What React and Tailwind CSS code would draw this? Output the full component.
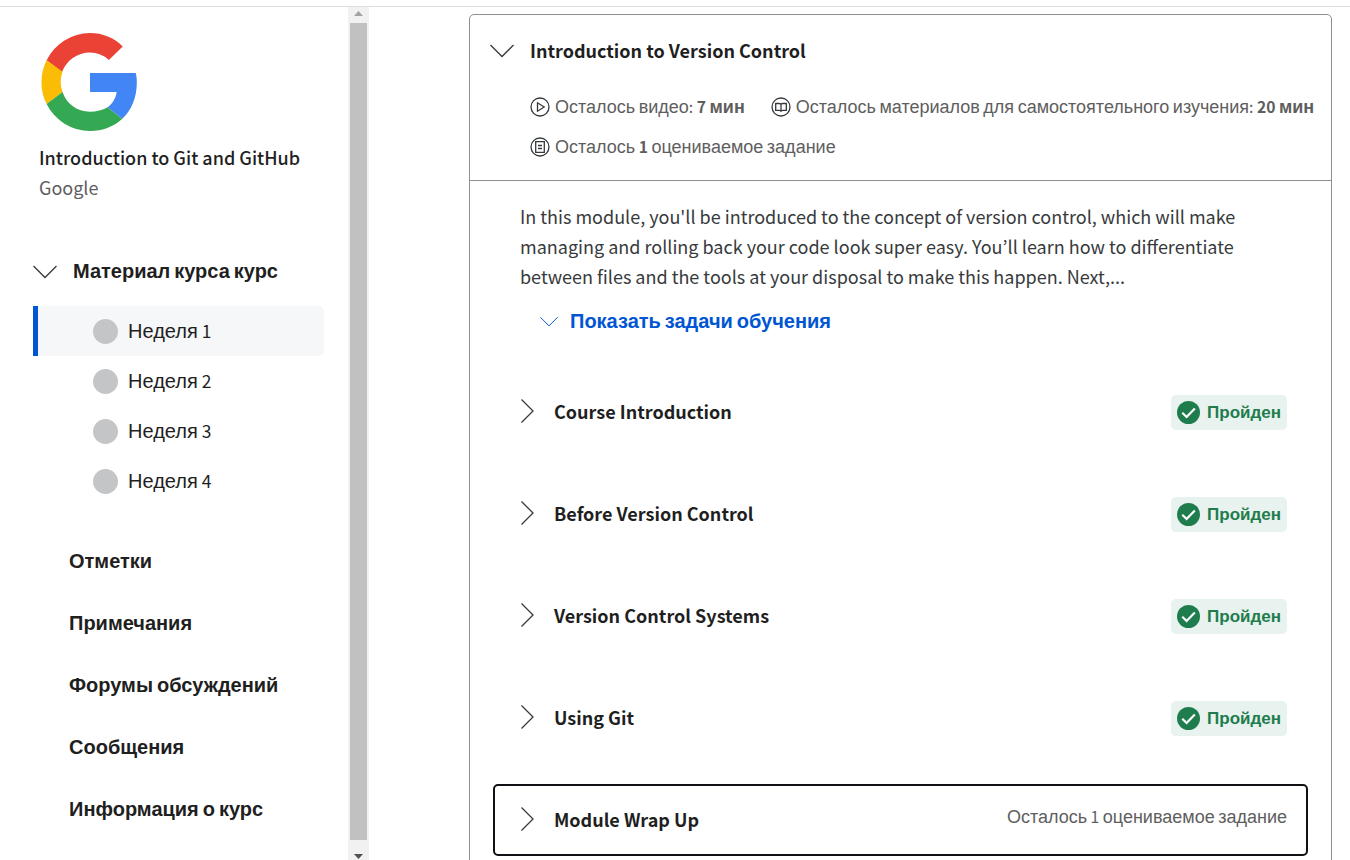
import React from "react";

const LATIN = "font-['Noto_Sans_CJK_KR','Noto_Sans',sans-serif] text-[0.87em]";
const CYRILLIC = "font-['Liberation_Sans',Arial,sans-serif]";

/* Cyrillic words use the Arial-metric face; digits, spaces and Latin use the humanist one. */
function Mixed({ children }) {
  return children
    .split(/([\u0400-\u04ff]+)/)
    .filter(Boolean)
    .map((part, i) => (
      <span key={i} className={/[\u0400-\u04ff]/.test(part) ? CYRILLIC : LATIN}>
        {part}
      </span>
    ));
}

function ChevronDown({ className }) {
  return (
    <svg viewBox="0 0 24 24" className={className} fill="none" stroke="currentColor" strokeWidth="1.3" aria-hidden="true">
      <path d="M0.5 7 12 18.500 23.500 7" />
    </svg>
  );
}

function ChevronRight() {
  return (
    <svg viewBox="0 0 24 24" className="size-6 shrink-0" fill="none" stroke="#373a3c" strokeWidth="1.3" aria-hidden="true">
      <path d="M0.5 0.5 12 12 0.5 23.5" />
    </svg>
  );
}

function GoogleLogo() {
  return (
    <svg viewBox="0 0 96 98" className="h-[98px] w-24" role="img" aria-label="Google">
      <path fill="#ea4335" d="M5.6 27.3A49 49 0 0 1 49 0c12.5 0 24 4.600 32.700 13.400L67.900 27A27.500 27.500 0 0 0 49 19.500c-12.800 0-23.700 8-28 19.600Z" />
      <path fill="#fbbc05" d="M5.600 27.300a49 49 0 0 0 0 43.800L21.500 59a30 30 0 0 1 0-20.200Z" />
      <path fill="#34a853" d="M5.600 71.100A49 49 0 0 0 49 98c12.800 0 24-4.300 32.300-12.200L66.500 74.300C61.600 77.300 55.600 78.700 49 78.700c-12.800 0-23.500-7.700-27.500-19.700Z" />
      <path fill="#4285f4" d="M49 40h45.700c.9 3 1.100 6 1.100 9.800 0 15-5.500 27.700-14.500 36L66.500 74.300c4.800-3.300 8.100-8.700 9.200-15.300H49Z" />
    </svg>
  );
}

function StatIcon({ kind }) {
  return (
    <svg viewBox="0 0 20 20" className="size-5 shrink-0" fill="none" stroke="#373a3c" strokeWidth="1.3" aria-hidden="true">
      <circle cx="10" cy="10" r="9" />
      {kind === "video" && <path d="M7.500 5.800v8.400l6.700-4.200Z" />}
      {kind === "reading" && (
        <path d="M10 6.800v7.200M4.700 6.500H8.300Q10 6.500 10 7.500 10 6.500 11.700 6.500h3.600v6.800h-3.800L10 14.300 8.500 13.300H4.700Z" />
      )}
      {kind === "quiz" && <path d="M5.700 4.700h8.600v10.600H5.700ZM8 8.500h4M8 11.500h4" />}
    </svg>
  );
}

function Stat({ kind, children }) {
  return (
    <li className="flex h-10 items-center gap-[5px]">
      <StatIcon kind={kind} />
      <span className="whitespace-nowrap">{children}</span>
    </li>
  );
}

function Passed() {
  return (
    <span className="flex h-[35px] items-center gap-[7px] rounded-[5px] bg-[#e8f2ee] px-1.5 text-[17px] font-bold text-[#1f7c4d]">
      <svg viewBox="0 0 24 24" className="size-[23px]" aria-hidden="true">
        <circle cx="12" cy="12" r="12" fill="#1f7c4d" />
        <path d="m5.500 12.300 4.500 4.400 8.600-8.900" fill="none" stroke="#fff" strokeWidth="2.300" />
      </svg>
      <Mixed>Пройден</Mixed>
    </span>
  );
}

const weeks = ["Неделя 1", "Неделя 2", "Неделя 3", "Неделя 4"];
const links = ["Отметки", "Примечания", "Форумы обсуждений", "Сообщения", "Информация о курс"];
const lessons = [
  { title: "Course Introduction", done: true },
  { title: "Before Version Control", done: true },
  { title: "Version Control Systems", done: true },
  { title: "Using Git", done: true },
  { title: "Module Wrap Up", done: false },
];

function Sidebar() {
  return (
    <aside className="flex w-[369px] shrink-0">
      <div className="min-w-0 flex-1 overflow-hidden pr-6 pl-[33px]">
        <div className="pt-[26px] pl-2">
          <GoogleLogo />
        </div>
        <div className="pt-[11px] pl-1.5 font-['Noto_Sans_CJK_KR','Noto_Sans',sans-serif] text-[18px] leading-[30px]">
          <h2 className="font-medium whitespace-nowrap">Introduction to Git and GitHub</h2>
          <p className="text-[#5e5e5e]">Google</p>
        </div>
        <button type="button" className="mt-11 flex h-[50px] items-center gap-4 text-[20px] font-bold whitespace-nowrap">
          <ChevronDown className="size-6 text-[#373a3c]" />
          <span>
            <Mixed>Материал курса курс</Mixed>
          </span>
        </button>
        <ul className="mt-[10px] text-[20px]">
          {weeks.map((week, i) => (
            <li key={week}>
              <a
                href="#week"
                className={
                  i === 0
                    ? "flex h-[50px] items-center gap-2.5 rounded-r-[5px] border-l-[5px] border-[#0056d2] bg-[#f5f7f8] pl-[55px]"
                    : "flex h-[50px] items-center gap-2.5 border-l-[5px] border-transparent pl-[55px]"
                }
              >
                <span className="size-[25px] rounded-full bg-[#c4c5c7]" />
                <span>
                  <Mixed>{week}</Mixed>
                </span>
              </a>
            </li>
          ))}
        </ul>
        <ul className="mt-6 pl-9 text-[20px] font-bold whitespace-nowrap">
          {links.map((label) => (
            <li key={label}>
              <a href="#section" className="flex h-[62px] items-center">
                <span>
                  <Mixed>{label}</Mixed>
                </span>
              </a>
            </li>
          ))}
        </ul>
      </div>
      <div className="flex w-[21px] flex-col items-center bg-[#f1f1f1]" aria-hidden="true">
        <svg viewBox="0 0 17 16" className="h-4 w-[17px] shrink-0">
          <path d="M8.500 4 13 9H4Z" fill="#a3a3a3" />
        </svg>
        <div className="w-[17px] flex-1 bg-[#c1c1c1]" />
        <svg viewBox="0 0 17 20" className="h-5 w-[17px] shrink-0">
          <path d="M4 14h9l-4.500 5Z" fill="#505050" />
        </svg>
      </div>
    </aside>
  );
}

function ModuleCard() {
  return (
    <section className="min-h-full rounded-[5px] border border-[#8e8f94]">
      <header className="border-b border-[#8e8f94] pb-[13px] pl-5">
        <button type="button" className="mt-[15px] flex h-10 items-center gap-4">
          <ChevronDown className="size-6 text-[#373a3c]" />
          <span className="font-['Noto_Sans_CJK_KR','Noto_Sans',sans-serif] text-[18px] leading-[30px] font-bold">
            Introduction to Version Control
          </span>
        </button>
        <ul className="flex flex-wrap gap-x-[26px] pt-[17px] pl-10 text-[18px] text-[#5e5e5e]">
          <Stat kind="video">
            <Mixed>Осталось видео: </Mixed>
            <b>
              <Mixed>7 мин</Mixed>
            </b>
          </Stat>
          <Stat kind="reading">
            <Mixed>Осталось материалов для самостоятельного изучения: </Mixed>
            <b>
              <Mixed>20 мин</Mixed>
            </b>
          </Stat>
          <Stat kind="quiz">
            <Mixed>Осталось </Mixed>
            <b>
              <Mixed>1</Mixed>
            </b>
            <Mixed> оцениваемое задание</Mixed>
          </Stat>
        </ul>
      </header>
      <div className="px-[23px] pt-5">
        <div className="px-[27px]">
          <p className="max-w-[740px] font-['Noto_Sans_CJK_KR','Noto_Sans',sans-serif] text-[18px] leading-[30px] text-[#373a3c]">
            In this module, you'll be introduced to the concept of version control, which will make managing and rolling
            back your code look super easy. You’ll learn how to differentiate between files and the tools at your
            disposal to make this happen. Next,...
          </p>
          <button type="button" className="mt-[10px] ml-5 flex h-10 items-center gap-3 text-[20px] font-bold text-[#0056d2]">
            <ChevronDown className="size-[18px]" />
            <span>
              <Mixed>Показать задачи обучения</Mixed>
            </span>
          </button>
        </div>
        <ul className="mt-[35px] flex flex-col gap-[30px] pb-8">
          {lessons.map(({ title, done }) => (
            <li key={title}>
              <button
                type="button"
                className={
                  done
                    ? "flex h-[72px] w-full items-start rounded-[5px] border-2 border-transparent pt-[17px] pr-[19px] pl-[26px] text-left"
                    : "flex h-[72px] w-full items-start rounded-[5px] border-2 border-[#0f1114] pt-[17px] pr-[19px] pl-[26px] text-left"
                }
              >
                <span className="flex h-8 flex-1 items-center gap-[9px]">
                  <ChevronRight />
                  <span className="font-['Noto_Sans_CJK_KR','Noto_Sans',sans-serif] text-[18px] leading-8 font-bold">
                    {title}
                  </span>
                </span>
                {done ? (
                  <Passed />
                ) : (
                  <span className="text-[18px] leading-[27px] text-[#5e5e5e]">
                    <Mixed>Осталось 1 оцениваемое задание</Mixed>
                  </span>
                )}
              </button>
            </li>
          ))}
        </ul>
      </div>
    </section>
  );
}

export default function App() {
  return (
    <div className="flex h-screen flex-col overflow-hidden bg-white text-[#1f1f1f]">
      <div className="h-[7px] shrink-0 border-b border-[#dedede]" />
      <div className="flex min-h-0 flex-1">
        <Sidebar />
        <main className="min-w-0 flex-1 overflow-hidden pt-[7px] pr-[18px] pl-[100px]">
          <ModuleCard />
        </main>
      </div>
    </div>
  );
}
